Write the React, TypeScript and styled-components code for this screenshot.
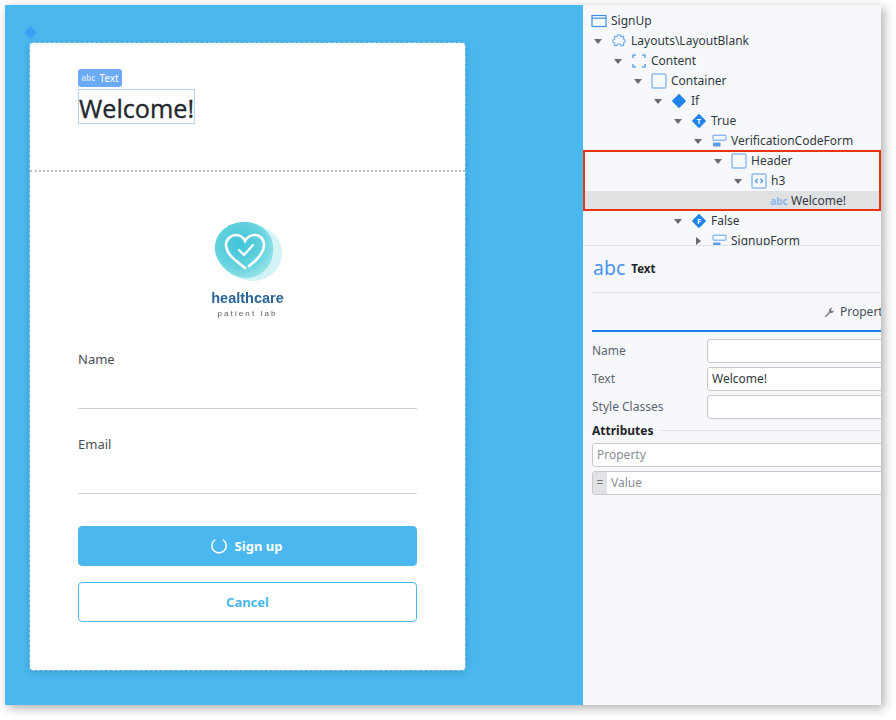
import React from "react";
import styled, { createGlobalStyle } from "styled-components";

const Global = createGlobalStyle`
  html, body { margin: 0; padding: 0; background: #fff; width: 896px; height: 720px; overflow: hidden; }
  body { font-family: "Noto Sans", "Open Sans", sans-serif; }
`;

const Page = styled.div`
  width: 896px;
  height: 720px;
  padding: 5px 15px 15px 5px;
  box-sizing: border-box;
`;
const Frame = styled.div`
  display: flex;
  height: 700px;
  box-shadow: 3px 3px 10px rgba(0, 0, 0, 0.32);
`;
const Canvas = styled.div`
  position: relative;
  width: 578px;
  flex: none;
  background: #4ab8ef;
  padding: 38px 0 0 25px;
  box-sizing: border-box;
`;
const Marker = styled.div`
  position: absolute;
  left: 21px;
  top: 23px;
  width: 9px;
  height: 9px;
  background: #3ba0f5;
  transform: rotate(45deg);
  border-radius: 1px;
`;
const Card = styled.div`
  width: 435px;
  height: 627px;
  background: #fff;
  border-radius: 3px;
  box-shadow: 0 2px 8px rgba(0, 0, 0, 0.18);
  outline: 1px dashed rgba(255, 255, 255, 0.4);
`;
const CardHeader = styled.div`
  height: 129px;
  padding: 46px 48px 0;
  box-sizing: border-box;
  border-bottom: 2px dotted #bdbdbd;
  position: relative;
`;
const Badge = styled.div`
  position: absolute;
  left: 48px;
  top: 26px;
  width: 44px;
  height: 18px;
  background: #6aaaf6;
  border-radius: 3px;
  color: #fff;
  font-size: 10px;
  line-height: 18px;
  display: flex;
  align-items: center;
  justify-content: center;
  gap: 4px;
`;
const BadgeGlyph = styled.span`
  font-size: 8px;
  opacity: 0.65;
  font-weight: 700;
`;
const Heading = styled.h3`
  display: inline-block;
  margin: 0;
  height: 35px;
  line-height: 36px;
  box-sizing: border-box;
  border: 1px solid #b4d3f7;
  font-size: 25.2px;
  font-weight: 400;
  -webkit-text-stroke: 0.35px #23272e;
  color: #23272e;
  font-family: "Open Sans", "Noto Sans", sans-serif;
  white-space: nowrap;
`;
const CardBody = styled.div`
  padding: 49px 48px 0;
  display: flex;
  flex-direction: column;
`;
const Logo = styled.div`
  display: flex;
  flex-direction: column;
  align-items: center;
  height: 98px;
  filter: blur(0.35px);
`;
const LogoName = styled.div`
  font-family: "Liberation Sans", sans-serif;
  font-weight: 700;
  font-size: 14.5px;
  line-height: 15px;
  margin-top: 6px;
  color: #2a6596;
`;
const LogoSub = styled.div`
  font-family: "Liberation Sans", sans-serif;
  font-size: 8px;
  line-height: 9px;
  margin-top: 3px;
  letter-spacing: 2.1px;
  color: #555c63;
`;
const Field = styled.div<{ $top: number }>`
  margin-top: ${(p) => p.$top}px;
  height: 59px;
  box-sizing: border-box;
  border-bottom: 1px solid #cfcfcf;
  color: #4a4f55;
  font-size: 13px;
  line-height: 18px;
`;
const Button = styled.div<{ $outline?: boolean; $top: number }>`
  margin-top: ${(p) => p.$top}px;
  height: 40px;
  box-sizing: border-box;
  border-radius: 4px;
  display: flex;
  align-items: center;
  justify-content: center;
  gap: 8px;
  font-size: 13px;
  font-weight: 700;
  background: ${(p) => (p.$outline ? "#fff" : "#4ab8ef")};
  color: ${(p) => (p.$outline ? "#4ab8ef" : "#fff")};
  border: 1px solid #4ab8ef;
`;
const SpinnerLabel = styled.span`
  margin-right: 2px;
`;
const Side = styled.div`
  width: 298px;
  flex: none;
  background: #f6f8fb;
  overflow: hidden;
  position: relative;
  color: #333a42;
  font-size: 12px;
`;
const Tree = styled.div`
  height: 241px;
  padding-top: 6px;
  box-sizing: border-box;
  overflow: hidden;
  border-bottom: 1px solid #e0e2e5;
  position: relative;
`;
const Row = styled.div<{ $level: number; $selected?: boolean }>`
  height: 20px;
  display: flex;
  align-items: center;
  padding-left: ${(p) => 8 + p.$level * 20}px;
  background: ${(p) => (p.$selected ? "#e0e1e3" : "transparent")};
  line-height: 20px;
  white-space: nowrap;
`;
const Arrow = styled.span<{ $dir: "down" | "right" | "none" }>`
  width: 12px;
  height: 12px;
  flex: none;
  margin-left: 1px;
  margin-right: 7px;
  display: flex;
  align-items: center;
  justify-content: center;
  &::before {
    content: "";
    display: ${(p) => (p.$dir === "none" ? "none" : "block")};
    border-style: solid;
    border-color: transparent;
    ${(p) =>
      p.$dir === "down"
        ? "border-width: 5px 4px 0 4px; border-top-color: #6a6a6a;"
        : "border-width: 4px 0 4px 5px; border-left-color: #6a6a6a;"}
  }
`;
const IconBox = styled.span`
  width: 16px;
  height: 16px;
  flex: none;
  margin-right: 4px;
  display: flex;
  align-items: center;
  justify-content: center;
`;
const SmallAbc = styled.span`
  font-size: 10px;
  font-weight: 700;
  color: #8db8ee;
`;
const HighlightBox = styled.div`
  position: absolute;
  left: 0;
  top: 145px;
  width: 298px;
  height: 61px;
  box-sizing: border-box;
  border: 2px solid #ee3311;
  pointer-events: none;
`;
const TitleRow = styled.div`
  height: 47px;
  box-sizing: border-box;
  padding-bottom: 2px;
  margin-left: 9px;
  display: flex;
  align-items: center;
  gap: 6px;
  border-bottom: 1px solid #e0e2e5;
`;
const BigAbc = styled.span`
  font-size: 19.5px;
  color: #4a94f0;
  line-height: 1;
  margin-left: 1px;
`;
const TitleText = styled.span`
  font-size: 11.5px;
  font-weight: 700;
  color: #1f242a;
`;
const Tabs = styled.div`
  height: 39px;
  margin-left: 9px;
  box-sizing: border-box;
  border-bottom: 2px solid #1b7fe8;
  display: flex;
  align-items: center;
  padding-left: 231px;
  gap: 5px;
  white-space: nowrap;
  color: #4a5058;
`;
const WrenchIcon = styled.svg`
  flex: none;
`;
const Props = styled.div`
  margin-left: 9px;
  padding-top: 7px;
`;
const PropRow = styled.div`
  display: flex;
  align-items: center;
  height: 24px;
  margin-bottom: 4px;
  color: #5c6670;
`;
const PropLabel = styled.div`
  width: 115px;
  flex: none;
  padding-bottom: 2px;
`;
const Input = styled.div`
  flex: none;
  width: 300px;
  height: 24px;
  box-sizing: border-box;
  background: #fff;
  border: 1px solid #c9c9c9;
  border-radius: 3px;
  padding-left: 4px;
  line-height: 22px;
  color: #333a42;
`;
const Section = styled.div`
  display: flex;
  align-items: center;
  gap: 8px;
  height: 15px;
  margin-bottom: 5px;
  font-weight: 700;
  color: #1f242a;
  &::after {
    content: "";
    flex: 1;
    height: 1px;
    background: #e0e2e5;
  }
`;
const WideInput = styled.div`
  width: 400px;
  height: 24px;
  box-sizing: border-box;
  background: #fff;
  border: 1px solid #c9c9c9;
  border-radius: 3px;
  margin-bottom: 4px;
  display: flex;
  line-height: 22px;
  color: #8a8f95;
  overflow: hidden;
`;
const Placeholder = styled.span`
  padding-left: 4px;
`;
const Equal = styled.span`
  width: 14px;
  background: #e0e2e5;
  text-align: center;
  color: #777;
`;
const RootRow = styled(Row)`
  padding-left: 8px;
`;

const stroke = { fill: "none", stroke: "#3f8fe8", strokeWidth: 1.2 };

const icons: Record<string, React.ReactNode> = {
  page: (
    <svg width="16" height="14" viewBox="0 0 16 14">
      <rect x="1" y="1.5" width="14" height="11" {...stroke} />
      <path d="M1 4.2h14" {...stroke} />
    </svg>
  ),
  layout: (
    <svg width="16" height="16" viewBox="0 0 16 16">
      <path
        d="M3.5 3.5h2.6c.2-2.4 3.6-2.4 3.8 0h2.6v2.6c2.2.4 2.2 3.4 0 3.8v2.6H9.9c-.2-2.2-3.6-2.2-3.8 0H3.5V9.9c-2.4-.2-2.4-3.6 0-3.8z"
        fill="none"
        stroke="#7fb2ee"
        strokeWidth="1.3"
      />
    </svg>
  ),
  content: (
    <svg width="14" height="14" viewBox="0 0 14 14">
      <path d="M1 4V1h3M10 1h3v3M13 10v3h-3M4 13H1v-3" fill="none" stroke="#2a86ea" strokeWidth="1.1" />
    </svg>
  ),
  container: (
    <svg width="16" height="16" viewBox="0 0 16 16">
      <rect x="1" y="1" width="14" height="14" rx="1.5" fill="none" stroke="#8fbcf0" strokeWidth="1.5" />
    </svg>
  ),
  if: (
    <svg width="16" height="16" viewBox="0 0 16 16">
      <path d="M8 .8 15.2 8 8 15.2.8 8z" fill="#1f83ec" />
    </svg>
  ),
  form: (
    <svg width="15" height="14" viewBox="0 0 15 14">
      <rect x="1" y="1.2" width="13" height="5" rx="1.2" fill="none" stroke="#8fbcf0" strokeWidth="1.4" />
      <rect x="1" y="8.5" width="7.5" height="4" rx="1" fill="#5a9cec" />
    </svg>
  ),
  code: (
    <svg width="16" height="16" viewBox="0 0 16 16">
      <rect x="1" y="1" width="14" height="14" rx="1.5" fill="none" stroke="#8fbcf0" strokeWidth="1.5" />
      <path d="M6.5 5.8 4.5 8l2 2.2M9.5 5.8l2 2.2-2 2.2" fill="none" stroke="#3f8ee8" strokeWidth="1.2" />
    </svg>
  ),
};

const Letter = ({ c }: { c: string }) => (
  <svg width="16" height="16" viewBox="0 0 16 16">
    <path d="M8 .8 15.2 8 8 15.2.8 8z" fill="#1f83ec" />
    <text x="8" y="10.6" textAnchor="middle" fontSize="7.5" fontWeight="700" fill="#fff" fontFamily="Noto Sans">
      {c}
    </text>
  </svg>
);

type Node = {
  label: string;
  level: number;
  icon: React.ReactNode;
  dir: "down" | "right" | "none";
  selected?: boolean;
};

const nodes: Node[] = [
  { label: "Layouts\\LayoutBlank", level: 0, icon: icons.layout, dir: "down" },
  { label: "Content", level: 1, icon: icons.content, dir: "down" },
  { label: "Container", level: 2, icon: icons.container, dir: "down" },
  { label: "If", level: 3, icon: icons.if, dir: "down" },
  { label: "True", level: 4, icon: <Letter c="T" />, dir: "down" },
  { label: "VerificationCodeForm", level: 5, icon: icons.form, dir: "down" },
  { label: "Header", level: 6, icon: icons.container, dir: "down" },
  { label: "h3", level: 7, icon: icons.code, dir: "down" },
  { label: "Welcome!", level: 8, icon: <SmallAbc>abc</SmallAbc>, dir: "none", selected: true },
  { label: "False", level: 4, icon: <Letter c="F" />, dir: "down" },
  { label: "SignupForm", level: 5, icon: icons.form, dir: "right" },
];

const LogoMark = () => (
  <svg width="72" height="64" viewBox="0 0 72 64">
    <defs>
      <radialGradient id="blob" cx="0.42" cy="0.4" r="0.6">
        <stop offset="0" stopColor="#3fc4d8" />
        <stop offset="0.7" stopColor="#66d3de" />
        <stop offset="1" stopColor="#8fe0e6" />
      </radialGradient>
    </defs>
    <path d="M6 26C8 10 24 2 42 4c15 2 27 11 28 27 1 17-14 30-32 29C20 58 4 44 6 26z" fill="#d3f3f5" />
    <path d="M3 24C5 8 20 0 35 1c14 1 24 10 26 23 2 14-6 30-23 33C20 59 1 42 3 24z" fill="url(#blob)" />
    <path
      d="M33 47 23 39c-6-5-9-9-9-15 0-6 5-10 10-10 4 0 7 2 9 6 2-4 6-6 10-6 5 0 9 4 9 10 0 7-5 12-10 17l-5 4"
      fill="none"
      stroke="#fff"
      strokeWidth="2.6"
      strokeLinecap="round"
    />
    <path d="M27 29l5 5 9-10" fill="none" stroke="#fff" strokeWidth="2.3" strokeLinecap="round" strokeLinejoin="round" />
  </svg>
);

const Spinner = () => (
  <svg width="16" height="16" viewBox="0 0 16 16">
    <path d="M3.7 2A7.2 7.2 0 1 0 12.3 2" fill="none" stroke="#fff" strokeWidth="1.5" strokeLinecap="round" />
  </svg>
);

const Wrench = () => (
  <WrenchIcon width="12" height="12" viewBox="0 0 12 12">
    <path d="M1.5 10.5 6 6c-.6-2 .8-4.3 3.6-4.3L8 3.4l.6 1.4 1.5.4L11.3 4C11.2 6.4 8.8 7.6 7 7L3 11z" fill="#7d7d7d" />
  </WrenchIcon>
);

export default function App() {
  return (
    <>
      <Global />
      <Page>
        <Frame>
          <Canvas>
            <Marker />
            <Card>
              <CardHeader>
                <Badge>
                  <BadgeGlyph>abc</BadgeGlyph>
                  Text
                </Badge>
                <Heading>Welcome!</Heading>
              </CardHeader>
              <CardBody>
                <Logo>
                  <LogoMark />
                  <LogoName>healthcare</LogoName>
                  <LogoSub>patient lab</LogoSub>
                </Logo>
                <Field $top={31}>Name</Field>
                <Field $top={26}>Email</Field>
                <Button $top={32}>
                  <Spinner />
                  <SpinnerLabel>Sign up</SpinnerLabel>
                </Button>
                <Button $outline $top={16}>
                  Cancel
                </Button>
              </CardBody>
            </Card>
          </Canvas>
          <Side>
            <Tree>
              <RootRow $level={0}>
                <IconBox>{icons.page}</IconBox>
                SignUp
              </RootRow>
              {nodes.map((n) => (
                <Row key={n.label} $level={n.level} $selected={n.selected}>
                  <Arrow $dir={n.dir} />
                  <IconBox>{n.icon}</IconBox>
                  {n.label}
                </Row>
              ))}
              <HighlightBox />
            </Tree>
            <TitleRow>
              <BigAbc>abc</BigAbc>
              <TitleText>Text</TitleText>
            </TitleRow>
            <Tabs>
              <Wrench />
              Properties
            </Tabs>
            <Props>
              <PropRow>
                <PropLabel>Name</PropLabel>
                <Input />
              </PropRow>
              <PropRow>
                <PropLabel>Text</PropLabel>
                <Input>Welcome!</Input>
              </PropRow>
              <PropRow>
                <PropLabel>Style Classes</PropLabel>
                <Input />
              </PropRow>
              <Section>Attributes</Section>
              <WideInput>
                <Placeholder>Property</Placeholder>
              </WideInput>
              <WideInput>
                <Equal>=</Equal>
                <Placeholder>Value</Placeholder>
              </WideInput>
            </Props>
          </Side>
        </Frame>
      </Page>
    </>
  );
}
